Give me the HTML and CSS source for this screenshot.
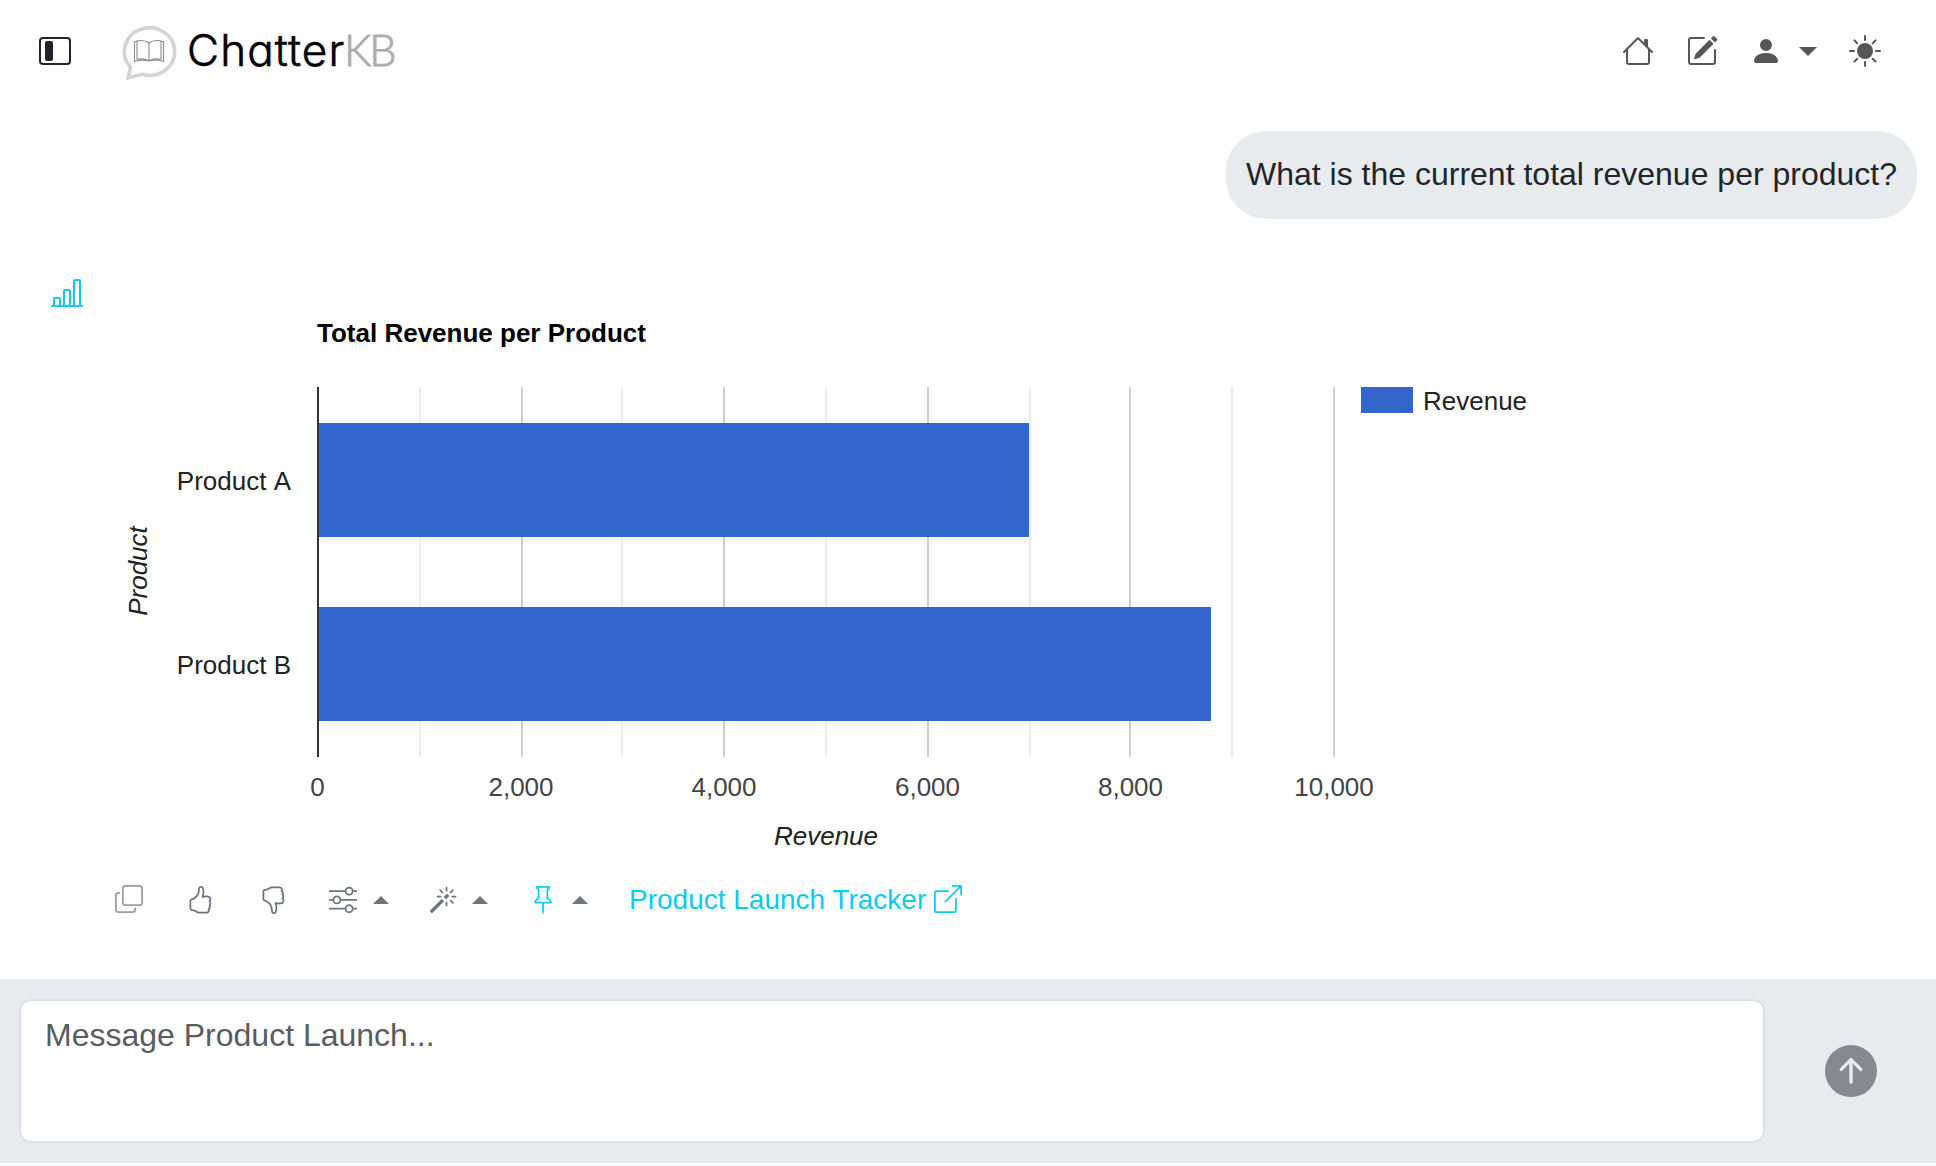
FILE: index.html
```html
<!DOCTYPE html>
<html lang="en">
<head>
<meta charset="utf-8">
<title>ChatterKB</title>
<link rel="stylesheet" href="styles.css">
</head>
<body>
<div class="app">
  <header class="topbar">
    <svg class="icon icon-sidebar" viewBox="0 0 16 16"><path d="M14 2a1 1 0 0 1 1 1v10a1 1 0 0 1-1 1H2a1 1 0 0 1-1-1V3a1 1 0 0 1 1-1zM2 1a2 2 0 0 0-2 2v10a2 2 0 0 0 2 2h12a2 2 0 0 0 2-2V3a2 2 0 0 0-2-2z"/><path d="M3 4a1 1 0 0 1 1-1h2a1 1 0 0 1 1 1v8a1 1 0 0 1-1 1H4a1 1 0 0 1-1-1z"/></svg>
    <div class="brand">
      <svg class="brand-mark" viewBox="0 0 54 54" fill="none">
        <path d="M8.500 41.200A25.200 23.800 0 1 1 20 48.300L6.300 51.800Z" stroke="#d4d4d4" stroke-width="3.600"/>
        <path d="M12.500 15.500v20q8-2.500 14.500-.5q6.500-2 14.500.5v-20h-2.500M12.500 15.500h2.500M15 14.800q8-1.200 12 2.200q4-3.400 12-2.200v18.400q-8-1-12 1.600q-4-2.600-12-1.600zM27 17v17.500" stroke="#8e8e8e" stroke-width="1.100"/>
      </svg>
      <div class="brand-name"><span class="brand-main">Chatter</span><span class="brand-kb">KB</span></div>
    </div>
    <nav class="tools">
      <svg class="icon" viewBox="0 0 16 16"><path fill-rule="evenodd" d="M2 13.500V7h1v6.500a.5.5 0 0 0 .5.5h9a.5.5 0 0 0 .5-.5V7h1v6.500a1.500 1.500 0 0 1-1.500 1.500h-9A1.500 1.500 0 0 1 2 13.500zm11-11V6l-2-2V2.500a.5.5 0 0 1 .5-.5h1a.5.5 0 0 1 .5.5z"/><path fill-rule="evenodd" d="M7.293 1.500a1 1 0 0 1 1.414 0l6.647 6.646a.5.5 0 0 1-.708.708L8 2.207 1.354 8.854a.5.5 0 1 1-.708-.708L7.293 1.500z"/></svg>
      <svg class="icon" viewBox="0 0 16 16"><path d="M15.502 1.940a.5.5 0 0 1 0 .706L14.459 3.690l-2-2L13.502.646a.5.5 0 0 1 .707 0l1.293 1.293zm-1.750 2.456-2-2L4.939 9.210a.5.5 0 0 0-.121.196l-.805 2.414a.25.25 0 0 0 .316.316l2.414-.805a.5.5 0 0 0 .196-.12l6.813-6.814z"/><path fill-rule="evenodd" d="M1 13.500A1.500 1.500 0 0 0 2.500 15h11a1.500 1.500 0 0 0 1.500-1.500v-6a.5.5 0 0 0-1 0v6a.5.5 0 0 1-.5.5h-11a.5.5 0 0 1-.5-.5v-11a.5.5 0 0 1 .5-.5H9a.5.5 0 0 0 0-1H2.500A1.500 1.500 0 0 0 1 2.500v11z"/></svg>
      <div class="user">
        <svg class="icon" viewBox="0 0 16 16"><path d="M3 14s-1 0-1-1 1-4 6-4 6 3 6 4-1 1-1 1H3zm5-6a3 3 0 1 0 0-6 3 3 0 0 0 0 6z"/></svg>
        <span class="caret-down"></span>
      </div>
      <svg class="icon" viewBox="0 0 16 16"><circle cx="8" cy="8" r="4"/><path d="M8 .5v2M8 13.500v2M.5 8h2M13.500 8h2M2.700 2.700l1.410 1.410M11.890 11.890l1.410 1.410M2.700 13.300l1.410-1.410M11.890 4.110l1.410-1.410" stroke="currentColor" stroke-linecap="round"/></svg>
    </nav>
  </header>

  <main class="thread">
    <div class="question">What is the current total revenue per product?</div>
    <section class="answer">
      <svg class="icon icon-chart" viewBox="0 0 16 16"><path d="M11 2a1 1 0 0 1 1-1h2a1 1 0 0 1 1 1v12h.5a.5.5 0 0 1 0 1H.5a.5.5 0 0 1 0-1H1v-3a1 1 0 0 1 1-1h2a1 1 0 0 1 1 1v3h1V7a1 1 0 0 1 1-1h2a1 1 0 0 1 1 1v7h1V2zm1 12h2V2h-2v12zm-3 0V7H7v7h2zm-5 0v-3H2v3h2z"/></svg>
      <div class="answer-body">
        <svg class="chart" viewBox="115 277 1500 600" shape-rendering="crispEdges">
          <text class="chart-title" x="317" y="342">Total Revenue per Product</text>
          <g class="grid-minor">
            <rect x="419" y="387" width="2" height="370"/><rect x="621" y="387" width="2" height="370"/><rect x="825" y="387" width="2" height="370"/><rect x="1029" y="387" width="2" height="370"/><rect x="1231" y="387" width="2" height="370"/>
          </g>
          <g class="grid-major">
            <rect x="521" y="387" width="2" height="370"/><rect x="723" y="387" width="2" height="370"/><rect x="927" y="387" width="2" height="370"/><rect x="1129" y="387" width="2" height="370"/><rect x="1333" y="387" width="2" height="370"/>
          </g>
          <g class="bars">
            <rect x="318" y="423" width="711" height="114"/>
            <rect x="318" y="607" width="893" height="114"/>
            <rect x="1361" y="387" width="52" height="26"/>
          </g>
          <rect class="baseline" x="317" y="387" width="2" height="370"/>
          <g class="labels" text-anchor="end"><text x="291" y="490">Product A</text><text x="291" y="674">Product B</text></g>
          <g class="ticks" text-anchor="middle"><text x="317.500" y="796">0</text><text x="521" y="796">2,000</text><text x="724" y="796">4,000</text><text x="927.500" y="796">6,000</text><text x="1130.500" y="796">8,000</text><text x="1334" y="796">10,000</text></g>
          <text class="labels" x="1423" y="410">Revenue</text>
          <text class="axis-title" x="826" y="844.500" text-anchor="middle">Revenue</text>
          <text class="axis-title" transform="translate(147 571) rotate(-90)" text-anchor="middle">Product</text>
        </svg>
        <div class="actions">
          <svg class="act act-copy" viewBox="0 0 16 16"><path fill-rule="evenodd" d="M4 2a2 2 0 0 1 2-2h8a2 2 0 0 1 2 2v8a2 2 0 0 1-2 2H6a2 2 0 0 1-2-2zm2-1a1 1 0 0 0-1 1v8a1 1 0 0 0 1 1h8a1 1 0 0 0 1-1V2a1 1 0 0 0-1-1zM2 5a1 1 0 0 0-1 1v8a1 1 0 0 0 1 1h8a1 1 0 0 0 1-1v-1h1v1a2 2 0 0 1-2 2H2a2 2 0 0 1-2-2V6a2 2 0 0 1 2-2h1v1z"/></svg>
          <svg class="act act-up" viewBox="0 0 16 16"><path id="thumb" d="M8.864.046C7.908-.193 7.020.53 6.956 1.466c-.072 1.051-.23 2.016-.428 2.590-.125.36-.479 1.013-1.040 1.639-.557.623-1.282 1.178-2.131 1.410C2.685 7.288 2 7.870 2 8.720v4.001c0 .845.682 1.464 1.448 1.545 1.070.114 1.564.415 2.068.723l.048.03c.272.165.578.348.97.484.397.136.861.217 1.466.217h3.500c.937 0 1.599-.477 1.934-1.064a1.860 1.860 0 0 0 .254-.912c0-.152-.023-.312-.077-.464.201-.263.38-.578.488-.901.11-.33.172-.762.004-1.149.069-.13.12-.269.159-.403.077-.27.113-.568.113-.857 0-.288-.036-.585-.113-.856a2.144 2.144 0 0 0-.138-.362 1.900 1.900 0 0 0 .234-1.734c-.206-.592-.682-1.100-1.200-1.272-.847-.282-1.803-.276-2.516-.211a9.840 9.840 0 0 0-.443.05 9.365 9.365 0 0 0-.062-4.509A1.380 1.380 0 0 0 9.125.111L8.864.046zM11.500 14.721H8c-.51 0-.863-.069-1.140-.164-.281-.097-.506-.228-.776-.393l-.04-.024c-.555-.339-1.198-.731-2.490-.868-.333-.036-.554-.29-.554-.55V8.720c0-.254.226-.543.62-.65 1.095-.3 1.977-.996 2.614-1.708.635-.71 1.064-1.475 1.238-1.978.243-.7.407-1.768.482-2.850.025-.362.36-.594.667-.518l.262.066c.16.04.258.143.288.255a8.340 8.340 0 0 1-.145 4.725.5.5 0 0 0 .595.644l.003-.001.014-.003.058-.014a8.908 8.908 0 0 1 1.036-.157c.663-.06 1.457-.054 2.110.164.175.058.45.3.57.65.107.308.087.67-.266 1.022l-.353.353.353.354c.043.043.105.141.154.315.048.167.075.37.075.581 0 .212-.027.414-.075.582-.05.174-.111.272-.154.315l-.353.353.353.354c.047.047.109.177.005.488a2.224 2.224 0 0 1-.505.805l-.353.353.353.354c.006.005.041.05.041.17a.866.866 0 0 1-.121.416c-.165.288-.503.56-1.066.56z"/></svg>
          <svg class="act act-down" viewBox="0 0 16 16"><use href="#thumb" transform="matrix(1 0 0 -1 0 16)"/></svg>
          <svg class="act act-sliders" viewBox="0 0 16 16"><path fill-rule="evenodd" d="M11.500 2a1.500 1.500 0 1 0 0 3 1.500 1.500 0 0 0 0-3zM9.050 3a2.500 2.500 0 0 1 4.900 0H16v1h-2.050a2.500 2.500 0 0 1-4.900 0H0V3h9.050zM4.500 7a1.500 1.500 0 1 0 0 3 1.500 1.500 0 0 0 0-3zM2.050 8a2.500 2.500 0 0 1 4.900 0H16v1H6.950a2.500 2.500 0 0 1-4.900 0H0V8h2.050zm9.450 4a1.500 1.500 0 1 0 0 3 1.500 1.500 0 0 0 0-3zm-2.450 1a2.500 2.500 0 0 1 4.900 0H16v1h-2.050a2.500 2.500 0 0 1-4.900 0H0v-1h9.050z"/></svg>
          <span class="caret-up"></span>
          <svg class="act act-magic" viewBox="0 0 16 16"><path d="M9.500 2.672a.5.5 0 1 0 1 0V.843a.5.5 0 0 0-1 0v1.829Zm4.500.035A.5.5 0 0 0 13.293 2L12 3.293a.5.5 0 1 0 .707.707L14 2.707ZM7.293 4A.5.5 0 1 0 8 3.293L6.707 2A.5.5 0 0 0 6 2.707L7.293 4Zm-.621 2.500a.5.5 0 1 0 0-1H4.843a.5.5 0 1 0 0 1h1.829Zm8.485 0a.5.5 0 1 0 0-1h-1.829a.5.5 0 0 0 0 1h1.829ZM13.293 10A.5.5 0 1 0 14 9.293L12.707 8a.5.5 0 1 0-.707.707L13.293 10ZM9.500 11.157a.5.5 0 0 0 1 0V9.328a.5.5 0 0 0-1 0v1.829Zm1.854-5.097a.5.5 0 0 0 0-.706l-.708-.708a.5.5 0 0 0-.707 0L8.646 5.940a.5.5 0 0 0 0 .707l.708.708a.5.5 0 0 0 .707 0l1.293-1.293Zm-3 3a.5.5 0 0 0 0-.706l-.708-.708a.5.5 0 0 0-.707 0L.646 13.940a.5.5 0 0 0 0 .707l.707.707a.5.5 0 0 0 .707 0L8.354 9.060Z"/></svg>
          <span class="caret-up"></span>
          <svg class="act act-pin" viewBox="0 0 16 16"><path d="M4.146.146A.5.5 0 0 1 4.500 0h7a.5.5 0 0 1 .5.5c0 .68-.342 1.174-.646 1.479-.126.125-.25.224-.354.298v4.431l.078.048c.203.127.476.314.751.555C12.360 7.775 13 8.527 13 9.500a.5.5 0 0 1-.5.5h-4v4.500c0 .276-.224 1.500-.5 1.500s-.5-1.224-.5-1.500V10h-4a.5.5 0 0 1-.5-.5c0-.973.64-1.725 1.170-2.189A5.921 5.921 0 0 1 5 6.708V2.277a2.770 2.770 0 0 1-.354-.298C4.342 1.674 4 1.179 4 .5a.5.5 0 0 1 .146-.354zm1.578 1.407A.5.5 0 0 1 6 2v5a.5.5 0 0 1-.276.447l-.068.037a4.922 4.922 0 0 0-.827.58c-.318.278-.585.596-.725.936h7.792c-.14-.34-.407-.658-.725-.936a4.915 4.915 0 0 0-.881-.61A.5.5 0 0 1 10 7V2a.5.5 0 0 1 .295-.458 1.775 1.775 0 0 0 .351-.271c.08-.08.155-.17.214-.271H5.140c.06.1.133.191.214.271a1.780 1.780 0 0 0 .37.282z"/></svg>
          <span class="caret-up"></span>
          <a class="source"><span>Product Launch Tracker</span><svg viewBox="0 0 16 16"><path fill-rule="evenodd" d="M8.636 3.500a.5.5 0 0 0-.5-.5H1.500A1.500 1.500 0 0 0 0 4.500v10A1.500 1.500 0 0 0 1.500 16h10a1.500 1.500 0 0 0 1.500-1.500V7.864a.5.5 0 0 0-1 0V14.500a.5.5 0 0 1-.5.5h-10a.5.5 0 0 1-.5-.5v-10a.5.5 0 0 1 .5-.5h6.636a.5.5 0 0 0 .5-.5z"/><path fill-rule="evenodd" d="M16 .5a.5.5 0 0 0-.5-.5h-5a.5.5 0 0 0 0 1h3.793L6.146 9.146a.5.5 0 1 0 .708.708L15 1.707V5.500a.5.5 0 0 0 1 0v-5z"/></svg></a>
        </div>
      </div>
    </section>
  </main>

  <footer class="composer">
    <div class="field">Message Product Launch...</div>
    <svg class="send" viewBox="0 0 52 52"><circle cx="26" cy="26" r="26" fill="#86898d"/><path d="M26 37.300V15M16.200 24.400L26 14.600l9.800 9.800" fill="none" stroke="#e9ecef" stroke-width="3.400" stroke-linecap="round" stroke-linejoin="round"/></svg>
  </footer>
</div>
</body>
</html>
```
FILE: styles.css
```css
* { box-sizing: border-box; }
body {
  margin: 0;
  background: #fff;
  color: #212529;
  font-family: "Liberation Sans", Arial, sans-serif;
}
svg { display: block; flex: none; }
.app {
  display: flex;
  flex-direction: column;
  width: 1936px;
  height: 1166px;
  padding-bottom: 3px;
  background: #fefefe;
  overflow: hidden;
}
.icon { width: 32px; height: 32px; fill: currentColor; }

/* Top bar */
.topbar {
  display: flex;
  align-items: center;
  height: 102px;
  padding: 0 55px 0 39px;
}
.icon-sidebar { color: #212529; }
.brand { display: flex; align-items: center; margin-left: 51px; }
.brand-mark { width: 54px; height: 54px; margin-top: 4px; overflow: visible; }
.brand-name {
  display: flex;
  align-items: baseline;
  margin: 0 0 3px 11px;
  font: 300 44px/60px Inter, sans-serif;
  font-feature-settings: "cv11";
}
.brand-main { width: 157px; color: #000; -webkit-text-stroke: 0.6px #000; letter-spacing: 1.1px; }
.brand-kb {
  color: #acacac;
  font-family: Lato, sans-serif;
  font-size: 43px;
  -webkit-text-stroke: 0.9px #acacac;
  letter-spacing: -2px;
}
.tools { display: flex; align-items: center; margin-left: auto; gap: 32px; color: #565656; }
.user { display: flex; align-items: center; gap: 17px; }
.caret-down {
  border: 9px solid transparent;
  border-top-color: #565656;
  border-bottom: 0;
}

/* Conversation */
.thread { display: flex; flex-direction: column; height: 877px; padding-top: 29px; }
.question {
  align-self: flex-end;
  width: 691px;
  height: 88px;
  margin-right: 19px;
  padding-left: 20px;
  border-radius: 40px;
  background: #e8ebee;
  font-size: 32px;
  line-height: 86px;
  white-space: nowrap;
}
.answer { display: flex; gap: 32px; padding: 58px 0 0 51px; }
.icon-chart { color: #0dcaf0; }
.chart { width: 1500px; height: 600px; font-size: 26px; }
.chart-title { font-weight: 700; fill: #000; }
.grid-minor { fill: #ebebeb; }
.grid-major { fill: #ccc; }
.bars { fill: #36c; }
.baseline { fill: #333; }
.labels { fill: #222; font-kerning: none; }
.ticks { fill: #444; }
.axis-title { fill: #222; font-style: italic; }

/* Answer actions */
.actions { display: flex; align-items: center; height: 30px; margin-top: 8px; color: #6c757d; }
.act { width: 28px; height: 28px; fill: currentColor; }
.act-copy { opacity: 0.7; margin-top: -2px; }
.act-up { margin-left: 43px; }
.act-down { margin-left: 45px; }
.act-sliders { margin: -2px 16px 0 42px; }
.act-magic { margin: 0 15px 0 40px; }
.act-pin { margin: 0 15px 0 41px; color: #0dcaf0; }
.caret-up {
  border: 8px solid transparent;
  border-bottom-color: #6c757d;
  border-top: 0;
}
.source {
  display: flex;
  align-items: center;
  gap: 8px;
  margin-left: 41px;
  color: #0dcaf0;
  font-size: 28px;
}
.source svg { width: 28px; height: 28px; margin-top: -2px; fill: currentColor; }

/* Message composer */
.composer {
  display: flex;
  align-items: center;
  height: 184px;
  padding: 0 59px 0 19px;
  background: #e7ebee;
}
.field {
  width: 1746px;
  height: 144px;
  padding: 14px 24px;
  border: 2px solid #dee1e7;
  border-radius: 12px;
  background: #fff;
  color: #595c5f;
  font-size: 32px;
  line-height: 40px;
}
.send { width: 52px; height: 52px; margin-left: auto; }
```
